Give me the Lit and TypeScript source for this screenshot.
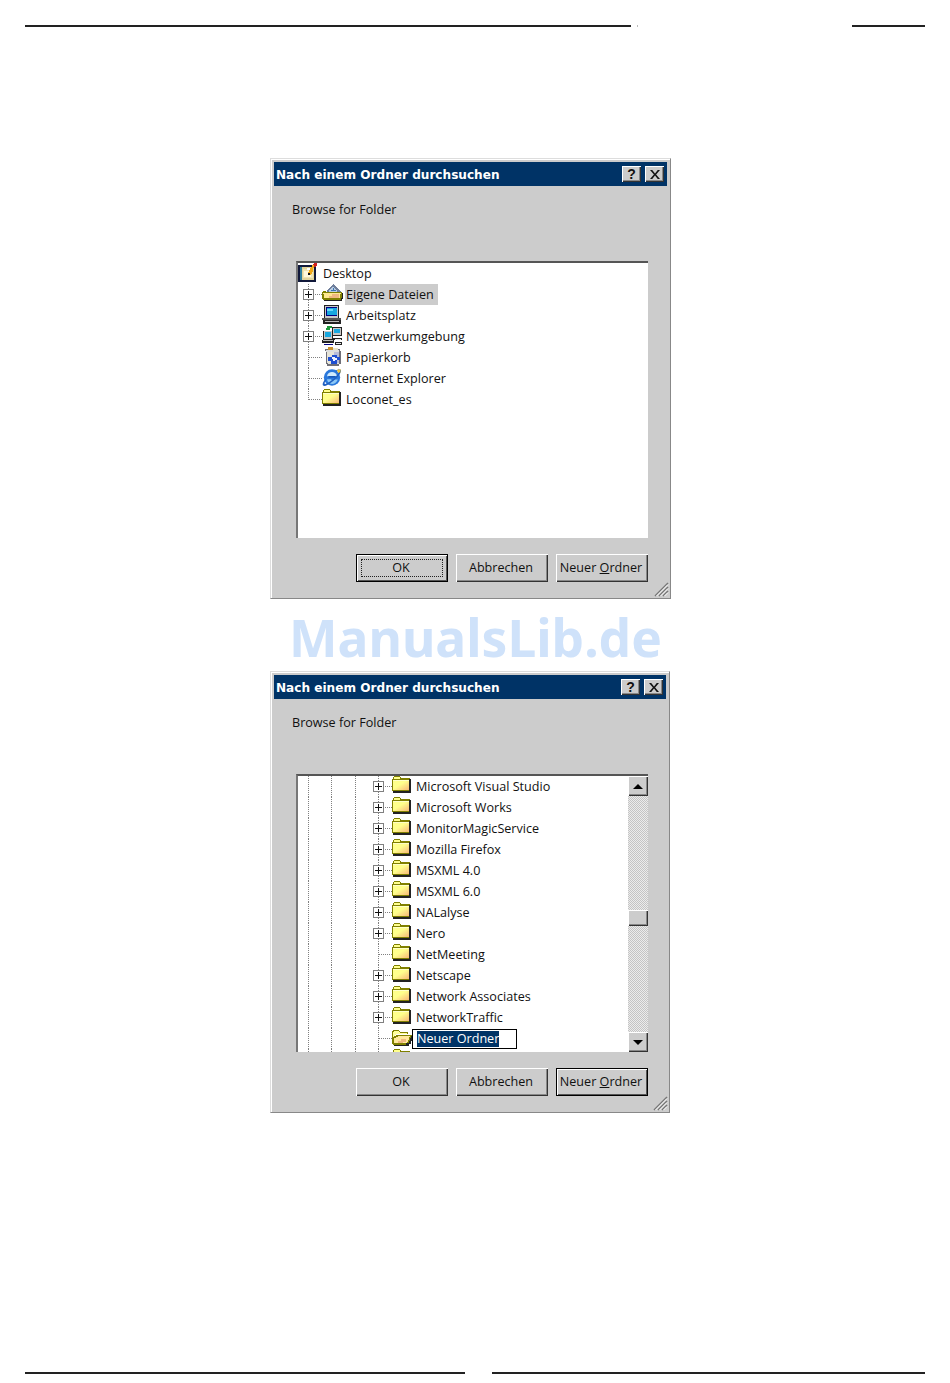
import { LitElement, html, css } from "lit";
import { customElement, property } from "lit/decorators.js";

const folder = html`<svg class="ico" width="19" height="17" viewBox="0 0 19 17" shape-rendering="crispEdges">
  <defs><linearGradient id="fg" x1="0" y1="0" x2="1" y2="1"><stop offset=".45" stop-color="#ffff8c"/><stop offset="1" stop-color="#f8b878"/></linearGradient></defs>
  <path d="M0 3h1V1h1V0h6v1h1v1h9v13H0z" fill="#808000"/>
  <path d="M1 4h16v10H1z" fill="url(#fg)"/>
  <path d="M2 1h6v2H2z" fill="#ffff8c"/>
  <path d="M1 4h16v1H1z" fill="#ffffc8"/>
  <path d="M17 3h2v14H1v-2h16z" fill="#222"/>
</svg>`;

const openFolder = html`<svg class="ico" width="21" height="18" viewBox="0 0 22 18" shape-rendering="crispEdges">
  <path d="M0 3h1V2h6v1h1v1h9v2H4v1H3v1H2v2H0z" fill="#808000"/>
  <path d="M1 4h1V3h5v1h1v1h8v1H4v1H3v1H2v1H1z" fill="#ffff9c"/>
  <path d="M0 16V9h2V8h2V7h17v2h-1v2h-1v3h-1v2h-1v1H1z" fill="#808000"/>
  <path d="M2 15V10h2V9h2V8h13v1h-1v3h-1v2h-1v1z" fill="#ffe99c"/>
  <path d="M9 11h6v3h-3v1H6v-2h3z" fill="#f0b880"/>
  <path d="M15 15h3v-2h1v-3h1V8h2v2h-1v3h-1v3h-2v2H2v-1h13z" fill="#222"/>
</svg>`;

const docFolder = html`<svg class="ico lift" width="21" height="19" viewBox="0 0 22 20" shape-rendering="crispEdges">
  <path d="M5 9V7h1V6h1V5h1V4h1V3h1V2h1V1h2v1h1v1h1v1h1v1h1v1h1v1h1v1h1v2z" fill="#6f7f9c"/>
  <path d="M7 9V7h1V6h1V5h1V4h1V3h1v1h1v1h1v1h1v1h1v2z" fill="#b8cde4"/>
  <path d="M9 7h2V5h2v2h2v1H9z" fill="#3f74b0"/>
  <path d="M0 9h1V8h3v1h17v9H1v-1H0z" fill="#808000"/>
  <path d="M1 10h19v2h-1v4H2v-4H1z" fill="#ffe890"/>
  <path d="M10 12h8v4H7v-2h3z" fill="#f0b880"/>
  <path d="M21 10h1v7h-1v2H2v-1h18v-2h1z" fill="#222"/>
</svg>`;

const computer = html`<svg class="ico" width="20" height="19" viewBox="0 0 22 21" shape-rendering="crispEdges">
  <path d="M2 0h17v15H2z" fill="#222"/>
  <path d="M3 1h15v13H3z" fill="#c8c8c8"/>
  <path d="M4 2h13v10H4z" fill="#000080"/>
  <path d="M5 3h11v8H5z" fill="#18a8e0"/>
  <path d="M6 4h6v3H6z" fill="#68d8f8"/>
  <path d="M0 14h21v3H0z" fill="#555"/>
  <path d="M1 15h18v1H1z" fill="#d8d8d8"/>
  <path d="M1 17h20v4H1z" fill="#222"/>
  <path d="M3 18h16v1H3z" fill="#bbb"/>
</svg>`;

const network = html`<svg class="ico" width="20" height="19" viewBox="0 0 22 21" shape-rendering="crispEdges">
  <path d="M11 1h11v10H11z" fill="#222"/>
  <path d="M12 2h9v8h-9z" fill="#c8c8c8"/>
  <path d="M13 3h7v5h-7z" fill="#18a8e0"/>
  <path d="M5 0h6v2H9v2H4V2h1z" fill="#1f9a3c"/>
  <path d="M1 5h11v10H1z" fill="#222"/>
  <path d="M2 6h9v8H2z" fill="#c8c8c8"/>
  <path d="M3 7h7v5H3z" fill="#18a8e0"/>
  <path d="M0 15h13v4H0z" fill="#222"/>
  <path d="M1 16h11v1H1z" fill="#bbb"/>
  <path d="M12 13h10v3H12zM14 18h8v3h-8z" fill="#222"/>
  <path d="M14 14h7v1h-7zM15 19h6v1h-6z" fill="#e8e8e8"/>
  <path d="M2 20h10v1H2z" fill="#000080"/>
</svg>`;

const recycle = html`<svg class="ico inset" width="19" height="19" viewBox="0 0 20 20" shape-rendering="crispEdges">
  <path d="M2 2h16v2h1v14h-2v2H4v-2H3V4H2z" fill="#6f6f78"/>
  <path d="M3 3h14v2H3z" fill="#dedede"/>
  <path d="M5 0h5v3H5z" fill="#c9902e"/>
  <path d="M11 1h5v2h-5z" fill="#e4e0c8"/>
  <path d="M4 5h13v13H5v-1H4z" fill="#e6e4d8"/>
  <path d="M12 5h5v12h-5z" fill="#b8bcd8"/>
  <path d="M9 8h6v2h3v4h-3v4H8v-3H5v-4h4z" fill="#1f4fd0"/>
  <path d="M11 10h2v2h2v2h-2v1h-2v-2H9v-2h2z" fill="#eef2ff"/>
</svg>`;

const ie = html`<svg class="ico" width="20" height="19" viewBox="0 0 22 20">
  <circle cx="11" cy="10" r="9" fill="#2a78dc"/>
  <path d="M5.500 8.500C6 5.500 8.500 4 11 4s5 1.500 5.500 4.500z" fill="#cfeafc"/>
  <path d="M5.500 12h4.500c.6 1.500 2.500 2 4 .2h3.500c-1.200 3-3.500 5-6.500 5-3 0-5-2.200-5.500-5.200z" fill="#8cc8f6"/>
  <path d="M7 8.500h8V10H7z" fill="#0f4fb0"/>
  <path d="M20.500 1.500c1.500 2-2.500 8-8.500 12.500S2.500 20.500 1 18.500C0 17 2 14 3.500 12l1 .8c-1.300 2-2 3.600-1.500 4.100 1 1 5-1.500 8.500-4.300s7.500-7.500 7-9.300c-.3-.7-1.500-.6-2.800 0l-1-.8c2-1.100 4.800-1.700 5.800-1z" fill="#1f5fc0"/>
  <path d="M18 0l1 1.500 2-.5-1 2 1 1.500-2.200-.3-1.300 1-.2-2.200L16 2l2-.4z" fill="#f2c230"/>
</svg>`;

const desktop = html`<svg class="ico" width="20" height="19" viewBox="0 0 22 21" shape-rendering="crispEdges">
  <path d="M0 2h17v2h3v17H0z" fill="#10183a"/>
  <path d="M2 4h15v2h1v13H2z" fill="#e2d49a"/>
  <path d="M2 4h2v15H2z" fill="#2e7e9e"/>
  <path d="M5 7h11v10H5z" fill="#efe4b4"/>
  <path d="M7 9h7v6H7z" fill="#fff9dc"/>
  <path d="M10 5h3v3h-3z" fill="#fff"/>
  <path d="M18 0h2v2h-1v2h-1v2h-1v2h-1v2h-1v2h-1v1h-3v-3h1V8h1V6h1V4h1V2h1V1h2z" fill="#f0a818"/>
  <path d="M18 0h3v3h-1v1h-2V2h-1V1h1z" fill="#d02020"/>
  <path d="M11 11h2v2h-2z" fill="#111"/>
</svg>`;

type Row = { label: string; icon?: unknown; depth: number; plus?: boolean; last?: boolean; selected?: boolean; edit?: boolean; root?: boolean };

const rowsOne: Row[] = [
  { label: "Desktop", icon: desktop, depth: 0, root: true },
  { label: "Eigene Dateien", icon: docFolder, depth: 0, plus: true, selected: true },
  { label: "Arbeitsplatz", icon: computer, depth: 0, plus: true },
  { label: "Netzwerkumgebung", icon: network, depth: 0, plus: true },
  { label: "Papierkorb", icon: recycle, depth: 0 },
  { label: "Internet Explorer", icon: ie, depth: 0 },
  { label: "Loconet_es", icon: folder, depth: 0, last: true },
];

const rowsTwo: Row[] = [
  ...["Microsoft Visual Studio", "Microsoft Works", "MonitorMagicService", "Mozilla Firefox", "MSXML 4.0", "MSXML 6.0", "NALalyse", "Nero"].map((label) => ({ label, depth: 3, plus: true })),
  { label: "NetMeeting", depth: 3 },
  ...["Netscape", "Network Associates", "NetworkTraffic"].map((label) => ({ label, depth: 3, plus: true })),
  { label: "Neuer Ordner", icon: openFolder, depth: 3, edit: true },
  { label: "", depth: 3 },
];

@customElement("browse-dialog")
class BrowseDialog extends LitElement {
  @property({ type: Array }) rows: Row[] = [];
  @property({ type: Boolean }) scroll = false;

  static styles = css`
    :host { display: block; }
    .dlg { position: relative; box-sizing: border-box; width: 401px; height: 441px; margin-left: 270px; padding: 3px 3px 0 2px; background: #ccc;
      border: 1px solid #ddd; border-right-color: #888; border-bottom-color: #888; box-shadow: inset 1px 1px 0 #fff;
      font-family: "Liberation Sans", sans-serif; color: #111; }
    .dlg.scroll { width: 400px; height: 442px; }
    .title { height: 24px; margin-left: 1px; background: #003366; color: #fff; display: flex; align-items: center; padding: 0 3px 0 2px;
      font: bold 12.100px "DejaVu Sans", sans-serif; }
    .title span { flex: 1; padding-top: 1px; }
    .cap { width: 19px; height: 16px; box-sizing: border-box; background: #ccc; display: flex; align-items: center; justify-content: center;
      box-shadow: inset 1px 1px 0 #fff, inset -1px -1px 0 #333, inset -2px -2px 0 #888; color: #111; font: bold 14px "Liberation Sans", sans-serif; }
    .cap + .cap { margin-left: 4px; }
    .prompt { height: 75px; box-sizing: border-box; padding: 15px 0 0 19px; font: 12.600px/18px "Open Sans", sans-serif; }
    .panel { margin-left: 23px; width: 352px; height: 277px; box-sizing: border-box; background: #fff; display: flex; overflow: hidden;
      border-top: 2px solid #555; border-left: 2px solid #777; }
    .scroll .panel { height: 278px; }
    .tree { flex: 1; min-width: 0; overflow: hidden; }
    .row { height: 21px; display: flex; align-items: center; font: 12.600px "Open Sans", sans-serif; white-space: nowrap; }
    .guide { position: relative; width: 23.330px; height: 21px; flex: none; }
    .guide::before, .branch::before { content: ""; position: absolute; left: 10px; top: 0; bottom: 0; width: 1px;
      background: repeating-linear-gradient(to bottom, #808080 0 1px, transparent 1px 2px); }
    .branch { position: relative; width: 24px; height: 21px; flex: none; }
    .branch.last::before { bottom: 10px; }
    .branch::after { content: ""; position: absolute; left: 11px; right: 0; top: 10px; height: 1px;
      background: repeating-linear-gradient(to right, #808080 0 1px, transparent 1px 2px); }
    .plus { position: absolute; left: 5px; top: 5px; width: 11px; height: 11px; box-sizing: border-box; background: #fff; border: 1px solid #808080; z-index: 1; }
    .plus::before { content: ""; position: absolute; left: 1px; right: 1px; top: 4px; height: 1px; background: #111; }
    .plus::after { content: ""; position: absolute; top: 1px; bottom: 1px; left: 4px; width: 1px; background: #111; }
    .ico { display: block; flex: none; }
    .ico.lift { margin-top: -1px; }
    .ico.inset { margin-left: 1px; }
    .icon { width: 23px; height: 21px; display: flex; align-items: flex-start; flex: none; }
    .root .icon { width: 25px; }
    .label { padding: 0 2px 0 1px; line-height: 21px; }
    .root .label { padding-left: 0; }
    .sel { background: #ccc; padding-right: 4px; }
    .edit { position: relative; margin-left: -3px; width: 105px; height: 20px; box-sizing: border-box; border: 1px solid #000; background: #fff; padding-left: 4px; line-height: 18px; z-index: 1; }
    .edit b { font-weight: normal; background: #003366; color: #fff; display: inline-block; line-height: 16px; }
    .sb { width: 20px; flex: none; display: flex; flex-direction: column; background: repeating-conic-gradient(#ececec 0 25%, #c4c4c4 0 50%) 0 0 / 2px 2px; }
    .sbtn { height: 20px; box-sizing: border-box; background: #ccc; display: flex; align-items: center; justify-content: center;
      box-shadow: inset 1px 1px 0 #fff, inset -1px -1px 0 #333, inset -2px -2px 0 #888; }
    .thumb { height: 16px; margin-top: 114px; margin-bottom: auto; background: #ccc; box-shadow: inset 1px 1px 0 #fff, inset -1px -1px 0 #333, inset -2px -2px 0 #888; }
    .up { width: 0; height: 0; border: 5px solid transparent; border-top: 0; border-bottom-color: #000; }
    .down { width: 0; height: 0; border: 5px solid transparent; border-bottom: 0; border-top-color: #000; }
    .btns { display: flex; justify-content: flex-end; gap: 8px; margin: 16px 0 0 0; width: 375px; }
    .btn { width: 92px; height: 28px; padding: 0 2px 2px 0; box-sizing: border-box; background: #ccc; display: flex; align-items: center; justify-content: center; position: relative;
      font: 12.600px "Open Sans", sans-serif; box-shadow: inset 1px 1px 0 #fff, inset -1px -1px 0 #333, inset -2px -2px 0 #888; }
    .btn.def { box-shadow: inset 0 0 0 1px #000, inset 2px 2px 0 #fff, inset -2px -2px 0 #555; }
    .btn.focus::after { content: ""; position: absolute; inset: 5px 5px 5px 5px; border: 1px dotted #222; }
    .grip { position: absolute; right: 1px; bottom: 1px; }
  `;

  private renderRow(r: Row) {
    if (r.root) {
      return html`<div class="row root"><div class="icon">${r.icon}</div><span class="label">${r.label}</span></div>`;
    }
    const guides = Array.from({ length: r.depth }, () => html`<div class="guide"></div>`);
    return html`<div class="row">
      ${guides}
      <div class="branch ${r.last ? "last" : ""}">${r.plus ? html`<div class="plus"></div>` : ""}</div>
      <div class="icon">${r.icon ?? folder}</div>
      ${r.edit
        ? html`<div class="edit"><b>${r.label}</b></div>`
        : html`<span class="label ${r.selected ? "sel" : ""}">${r.label}</span>`}
    </div>`;
  }

  render() {
    return html`<div class="dlg ${this.scroll ? "scroll" : ""}">
      <div class="title">
        <span>Nach einem Ordner durchsuchen</span>
        <div class="cap">?</div>
        <div class="cap"><svg width="10" height="9" viewBox="0 0 9 8"><path d="M0 0h2l2.500 3L7 0h2L5.500 4 9 8H7L4.500 5 2 8H0l3.500-4z" fill="#111"/></svg></div>
      </div>
      <div class="prompt">Browse for Folder</div>
      <div class="panel">
        <div class="tree">${this.rows.map((r) => this.renderRow(r))}</div>
        ${this.scroll
          ? html`<div class="sb"><div class="sbtn"><div class="up"></div></div><div class="thumb"></div><div class="sbtn"><div class="down"></div></div></div>`
          : ""}
      </div>
      <div class="btns">
        <div class="btn ${this.scroll ? "" : "def focus"}">OK</div>
        <div class="btn">Abbrechen</div>
        <div class="btn ${this.scroll ? "def" : ""}"><span>Neuer <u>O</u>rdner</span></div>
      </div>
      <svg class="grip" width="16" height="16" viewBox="0 0 16 16"><path d="M15 2 2 15M15 6l-9 9M15 10l-5 5" stroke="#777" stroke-width="1.500" fill="none"/><path d="M15 3.500 3.500 15M15 7.500 7.500 15M15 11.500 11.500 15" stroke="#fff" fill="none"/></svg>
    </div>`;
  }
}

@customElement("app-root")
export class AppRoot extends LitElement {
  static styles = css`
    :host { display: block; width: 950px; height: 1383px; background: #fff; overflow: hidden; }
    .rule { display: flex; padding: 0 25px; height: 2px; }
    .seg { background: #222; height: 2px; }
    .top { margin-top: 25px; margin-bottom: 131px; }
    .t1 { width: 606px; }
    .tick { width: 1px; height: 2px; margin-left: 6px; background: #bbb; }
    .t2 { width: 73px; margin-left: auto; }
    .b1 { width: 440px; }
    .b2 { width: 433px; margin-left: auto; }
    .bottom { margin-top: 259px; }
    .mark { height: 72px; padding-left: 289px; box-sizing: border-box; font: bold 51.500px/76px "Noto Sans", sans-serif; color: #cfe2fa; white-space: nowrap; }
  `;

  render() {
    return html`
      <div class="rule top"><div class="seg t1"></div><div class="tick"></div><div class="seg t2"></div></div>
      <browse-dialog .rows=${rowsOne}></browse-dialog>
      <div class="mark">ManualsLib.de</div>
      <browse-dialog .rows=${rowsTwo} scroll></browse-dialog>
      <div class="rule bottom"><div class="seg b1"></div><div class="seg b2"></div></div>
    `;
  }
}
